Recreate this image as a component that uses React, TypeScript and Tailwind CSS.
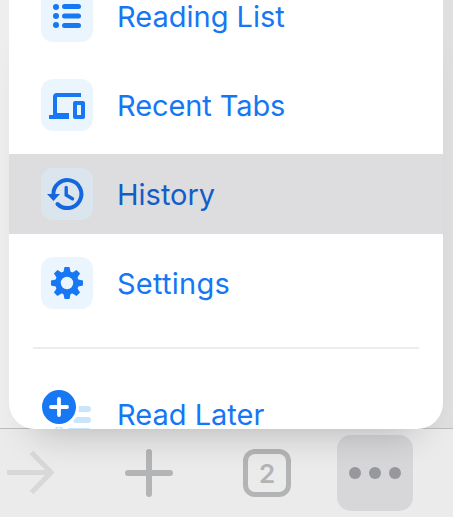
import type { ReactNode } from "react";

function Tile({ dim, children }: { dim?: boolean; children: ReactNode }) {
  return (
    <div className={`h-[52px] w-[52px] shrink-0 overflow-hidden rounded-[12px] ${dim ? "bg-[#dbe5ee] text-[#1467df]" : "bg-[#ebf5fe] text-[#1877f2]"}`}>
      {children}
    </div>
  );
}

function Row({ icon, label, active, tracking }: { icon: ReactNode; label: string; active?: boolean; tracking: string }) {
  return (
    <div className={`flex h-20 shrink-0 items-center pl-8 ${active ? "bg-[#dddddf]" : ""}`}>
      {icon}
      <span className={`ml-6 whitespace-nowrap pt-[2px] text-[29px] leading-9 font-[370] ${tracking} ${active ? "text-[#125dca]" : "text-[#1677f5]"}`}>{label}</span>
    </div>
  );
}

function ListIcon() {
  return (
    <svg viewBox="0 0 52 52" className="size-[52px]" stroke="currentColor" strokeWidth="5" strokeLinecap="round">
      <path d="M23.5 16.5H37.5M23.5 26H37.5M23.5 35.5H37.5" />
      <g fill="currentColor" stroke="none">
        <circle cx="15" cy="17" r="3" />
        <circle cx="15" cy="26" r="3" />
        <circle cx="15" cy="35" r="3" />
      </g>
    </svg>
  );
}

function DevicesIcon() {
  return (
    <svg viewBox="0 0 52 52" className="size-[52px]" fill="currentColor">
      <path d="M12 34V18a4 4 0 0 1 4-4h24v4H16v16h12v6H8v-4h4z" />
      <path fillRule="evenodd" d="M34 22h8a2 2 0 0 1 2 2v14a2 2 0 0 1-2 2h-8a2 2 0 0 1-2-2V24a2 2 0 0 1 2-2zm2 4v10h4V26z" />
    </svg>
  );
}

function HistoryIcon() {
  return (
    <svg viewBox="0 0 52 52" className="size-[52px]" fill="none" stroke="currentColor" strokeWidth="4" strokeLinecap="round">
      <path d="M12.4 27A14 14 0 1 1 16.5 36" strokeLinecap="round" />
      <path d="M25.2 19.5V27l6.3 3.8" strokeWidth="3.4" />
      <path d="M6 26h13l-6.5 7z" fill="currentColor" stroke="none" />
    </svg>
  );
}

function GearIcon() {
  return (
    <svg viewBox="0 0 52 52" className="size-[52px]" fill="currentColor">
      {[0, 45, 90, 135, 180, 225, 270, 315].map((angle) => (
        <path key={angle} d="M22 17l1.5-7h5L30 17z" transform={`rotate(${angle} 26 26)`} />
      ))}
      <circle cx="26" cy="26" r="9" fill="none" stroke="currentColor" strokeWidth="5.6" />
    </svg>
  );
}

function ReadLaterIcon() {
  return (
    <svg viewBox="0 0 52 52" className="size-[52px] shrink-0 overflow-visible">
      <g stroke="#c9e5fc" strokeWidth="6" strokeLinecap="round">
        <path d="M37 21H47M35 32H47M29 43H47" />
        <circle cx="18" cy="42" r="1" />
      </g>
      <circle cx="18" cy="19" r="20" fill="#fff" />
      <circle cx="18" cy="19" r="17" fill="#1877f2" />
      <path d="M10 19H26M18 11V27" stroke="#fff" strokeWidth="3.8" strokeLinecap="round" />
    </svg>
  );
}

export default function App() {
  return (
    <div className="flex h-[517px] w-[453px] flex-col overflow-hidden bg-[#ebebeb] font-['Inter','Liberation_Sans',sans-serif]">
      <div className="flex h-[429px] shrink-0 border-b border-[#bcbcbc] bg-linear-to-r from-[#eeeeee] from-50% to-[#dfdfdf] to-50%">
        <main className="z-10 ml-[9px] h-[429px] w-[434px] overflow-hidden rounded-b-[26px] bg-white shadow-[0_28px_36px_-26px_rgba(0,0,0,0.24)]">
          <div className="-mt-6 flex flex-col">
            <div className="flex flex-col gap-[9px]">
              <Row label="Reading List" tracking="tracking-normal" icon={<Tile><ListIcon /></Tile>} />
              <Row label="Recent Tabs" tracking="tracking-[-0.1px]" icon={<Tile><DevicesIcon /></Tile>} />
              <Row label="History" tracking="tracking-normal" active icon={<Tile dim><HistoryIcon /></Tile>} />
              <Row label="Settings" tracking="tracking-[0.25px]" icon={<Tile><GearIcon /></Tile>} />
            </div>
            <hr className="mx-6 mt-6 mb-[25px] h-[2px] border-0 bg-[#ededee]" />
            <Row label="Read Later" tracking="tracking-normal" icon={<ReadLaterIcon />} />
          </div>
        </main>
      </div>
      <footer className="flex h-[88px] shrink-0 items-center">
        <svg viewBox="0 0 62 88" className="h-[88px] w-[62px]" fill="none" stroke="#d8d8d8" strokeWidth="5">
          <path d="M7 43.5H51M31.5 23.5L51 43.5L31.5 63.5" />
        </svg>
        <svg viewBox="0 0 48 48" className="ml-[63px] size-12" stroke="#b2b4b6" strokeWidth="6" strokeLinecap="round">
          <path d="M3 24H45M24 3V45" />
        </svg>
        <div className="ml-[70px] flex size-12 items-center justify-center rounded-[12px] border-[5px] border-[#b2b4b6] text-[26px] font-semibold text-[#b2b4b6]">2</div>
        <div className="ml-[46px] flex size-[76px] items-center justify-center gap-2 rounded-[14px] bg-[#d7d7da]">
          <i className="size-3 rounded-full bg-[#96989c]" />
          <i className="size-3 rounded-full bg-[#96989c]" />
          <i className="size-3 rounded-full bg-[#96989c]" />
        </div>
      </footer>
    </div>
  );
}
